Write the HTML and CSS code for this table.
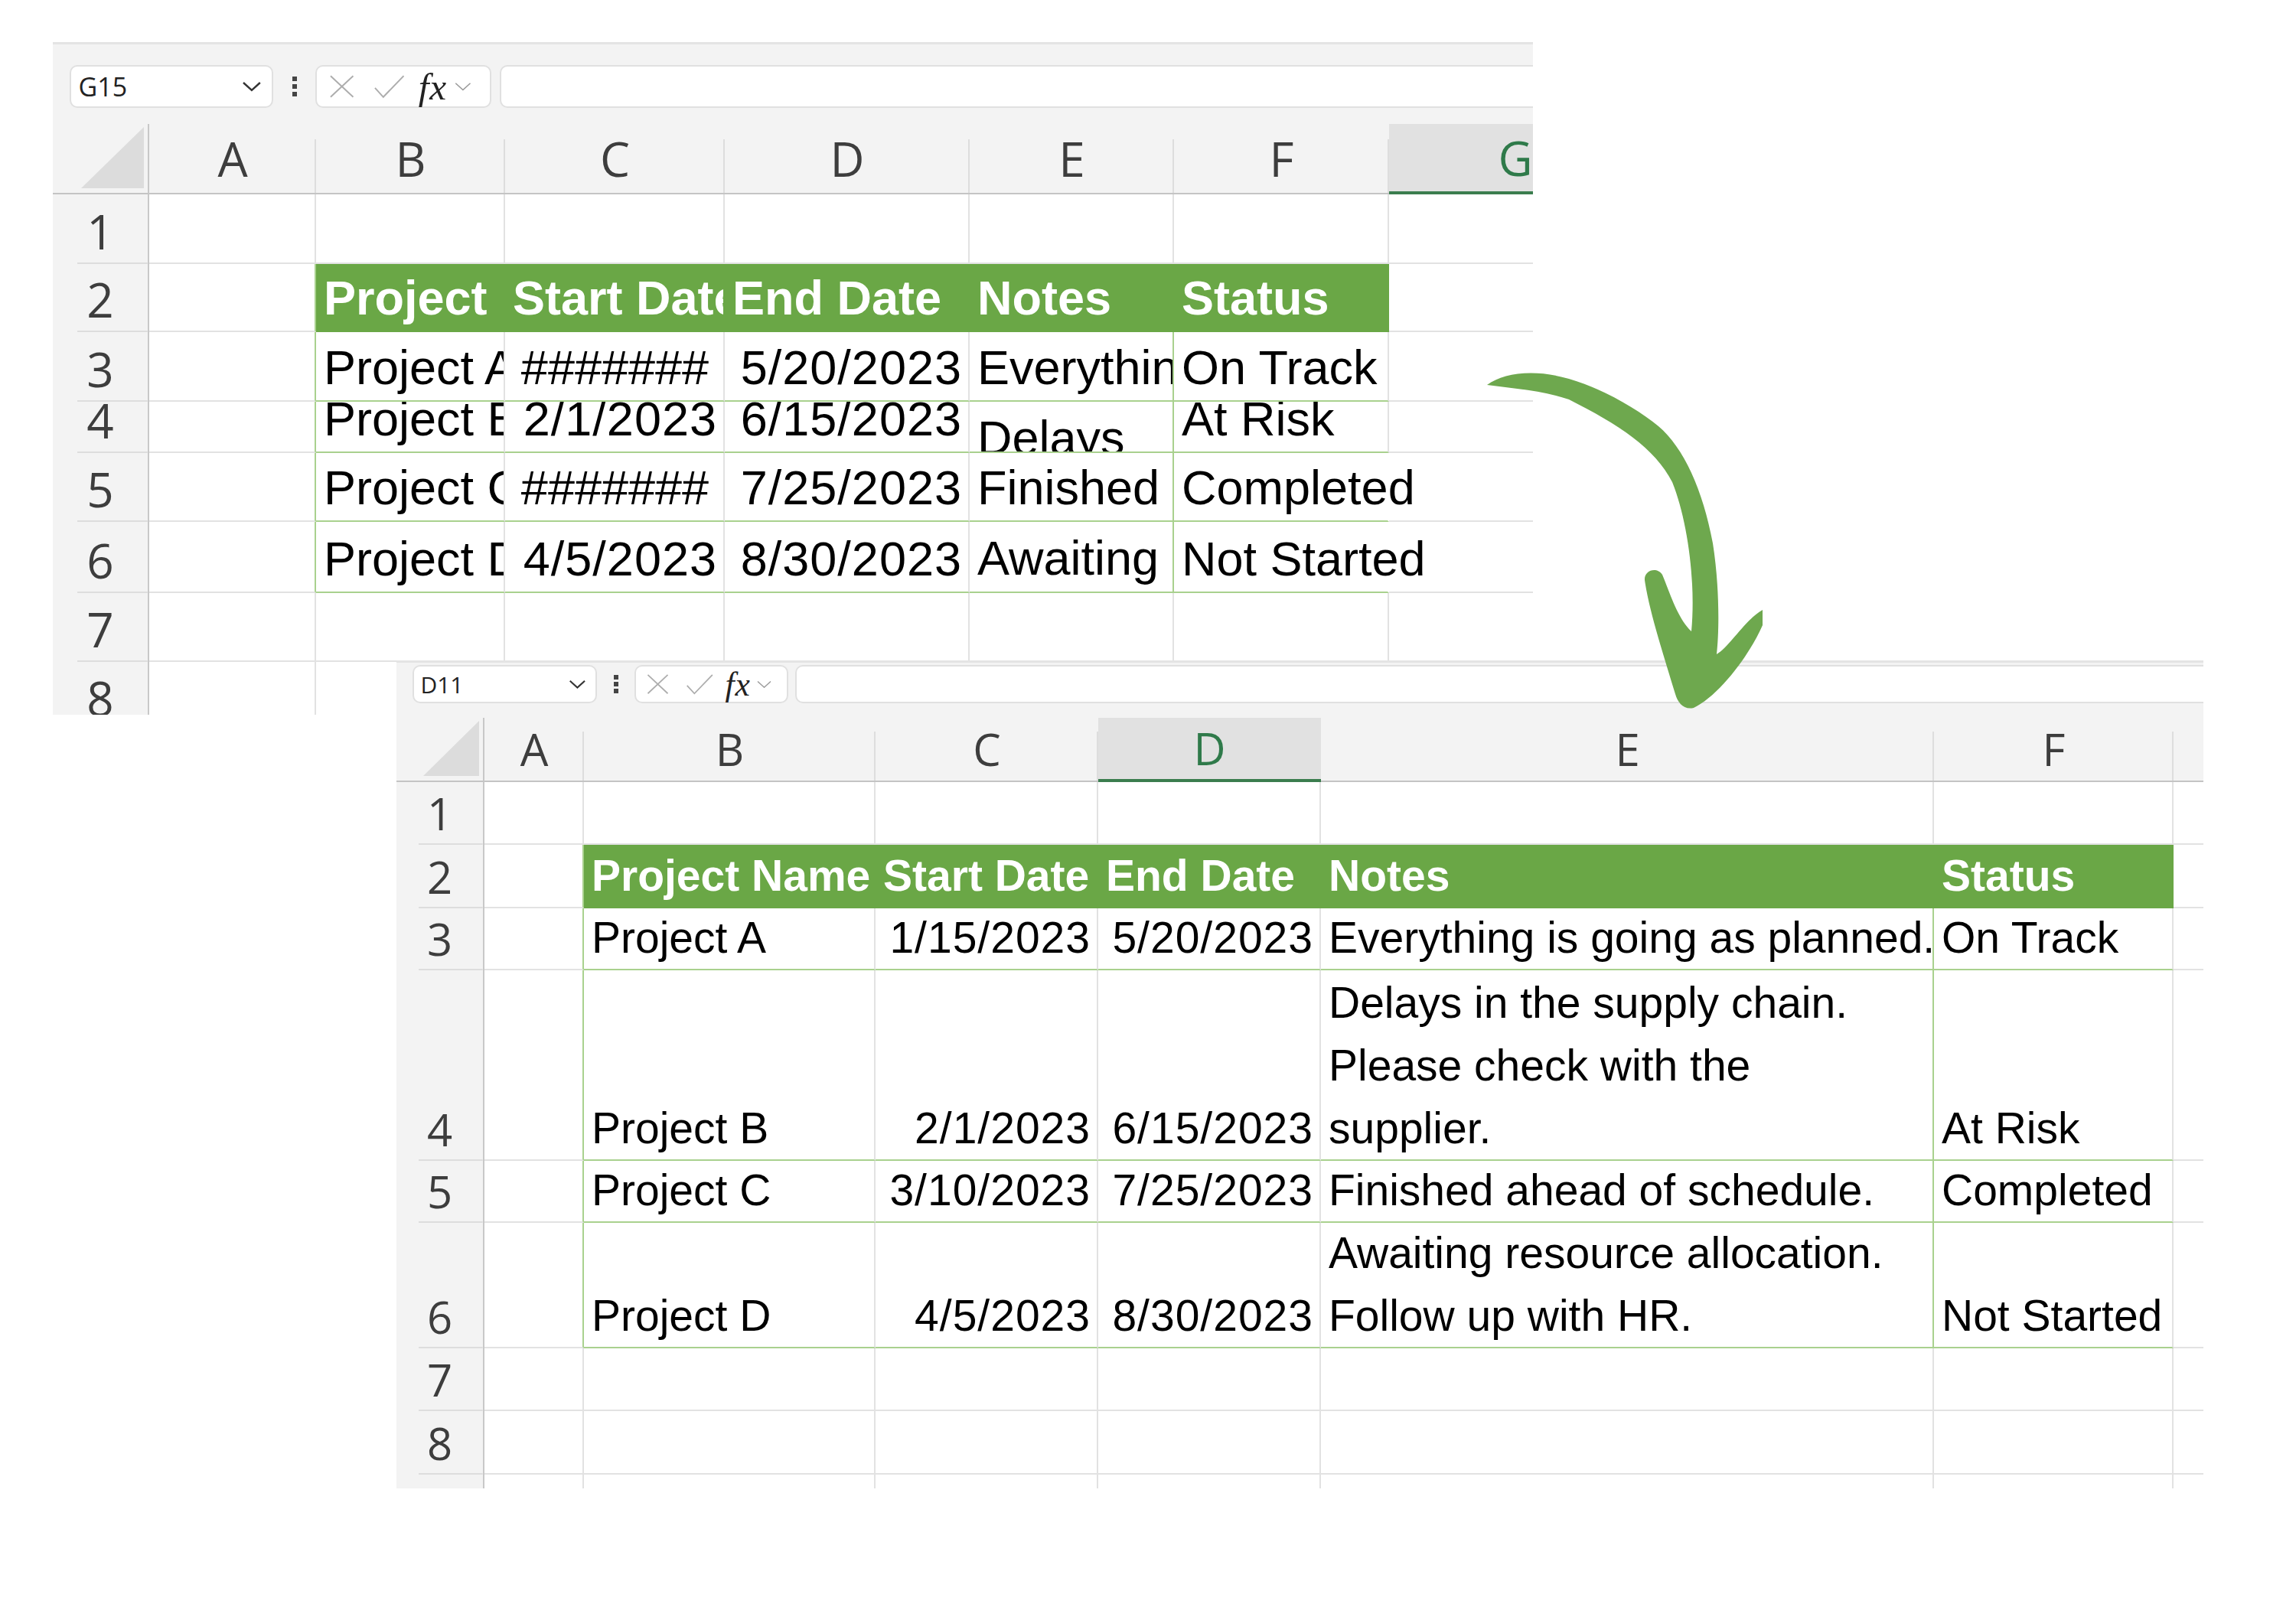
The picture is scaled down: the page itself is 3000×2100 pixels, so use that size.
FILE: index.html
```html
<!DOCTYPE html>
<html lang="en">
<head>
    <meta charset="UTF-8">
    <meta name="viewport" content="width=device-width, initial-scale=1.0">
    <title>Wrap Text: Before and After</title>
    <link rel="stylesheet" href="styles.css">
</head>
<body>
    <div class="canvas">

        <!-- before: columns too narrow, no wrap -->
        <div class="sheet sheet-top">
            <div class="toolbar">
                <div class="namebox"><span>G15</span><svg class="chev" viewBox="0 0 26 14"><path d="M2 2l11 10 11-10"/></svg></div>
                <div class="kebab"><i></i><i></i><i></i></div>
                <div class="fxbox">
                    <svg class="ico ico-x" viewBox="0 0 38 32"><path d="M4 2l30 28M34 2L4 30"/></svg>
                    <svg class="ico ico-ok" viewBox="0 0 42 32"><path d="M2 18l11 12L40 2"/></svg>
                    <span class="fx">fx</span>
                    <svg class="chev chev-sm" viewBox="0 0 26 14"><path d="M2 2l11 10 11-10"/></svg>
                </div>
                <div class="formula"></div>
            </div>
            <div class="grid">
                <div class="corner"><i></i></div>
                <div class="ch">A</div><div class="ch">B</div><div class="ch">C</div><div class="ch">D</div><div class="ch">E</div><div class="ch">F</div><div class="ch sel">G</div>

                <div class="rh">1</div>
                <div class="c"></div><div class="c"></div><div class="c"></div><div class="c"></div><div class="c"></div><div class="c"></div><div class="c"></div>

                <div class="rh">2</div>
                <div class="c tl"></div>
                <div class="c th">Project Name</div>
                <div class="c th">Start Date</div>
                <div class="c th">End Date</div>
                <div class="c th">Notes</div>
                <div class="c th">Status</div>
                <div class="c"></div>

                <div class="rh">3</div>
                <div class="c tl"></div>
                <div class="c td">Project A</div>
                <div class="c td ctr">#######</div>
                <div class="c td r">5/20/2023</div>
                <div class="c td te">Everything is going as planned.</div>
                <div class="c td">On Track</div>
                <div class="c"></div>

                <div class="rh">4</div>
                <div class="c tl"></div>
                <div class="c td">Project B</div>
                <div class="c td r">2/1/2023</div>
                <div class="c td r">6/15/2023</div>
                <div class="c td te wrap"><span>Delays in the supply chain. Please check with the supplier.</span></div>
                <div class="c td">At Risk</div>
                <div class="c"></div>

                <div class="rh">5</div>
                <div class="c tl"></div>
                <div class="c td">Project C</div>
                <div class="c td ctr">#######</div>
                <div class="c td r">7/25/2023</div>
                <div class="c td te">Finished ahead of schedule.</div>
                <div class="c td spill">Completed</div>
                <div class="c"></div>

                <div class="rh">6</div>
                <div class="c tl"></div>
                <div class="c td">Project D</div>
                <div class="c td r">4/5/2023</div>
                <div class="c td r">8/30/2023</div>
                <div class="c td te wrap"><span>Awaiting resource allocation. Follow up with HR.</span></div>
                <div class="c td spill">Not Started</div>
                <div class="c"></div>

                <div class="rh">7</div>
                <div class="c"></div><div class="c"></div><div class="c"></div><div class="c"></div><div class="c"></div><div class="c"></div><div class="c"></div>

                <div class="rh">8</div>
                <div class="c"></div><div class="c"></div><div class="c"></div><div class="c"></div><div class="c"></div><div class="c"></div><div class="c"></div>
            </div>
        </div>

        <!-- after: autofit widths + wrap text -->
        <div class="sheet sheet-bottom">
            <div class="toolbar">
                <div class="namebox"><span>D11</span><svg class="chev" viewBox="0 0 26 14"><path d="M2 2l11 10 11-10"/></svg></div>
                <div class="kebab"><i></i><i></i><i></i></div>
                <div class="fxbox">
                    <svg class="ico ico-x" viewBox="0 0 38 32"><path d="M4 2l30 28M34 2L4 30"/></svg>
                    <svg class="ico ico-ok" viewBox="0 0 42 32"><path d="M2 18l11 12L40 2"/></svg>
                    <span class="fx">fx</span>
                    <svg class="chev chev-sm" viewBox="0 0 26 14"><path d="M2 2l11 10 11-10"/></svg>
                </div>
                <div class="formula"></div>
            </div>
            <div class="grid">
                <div class="corner"><i></i></div>
                <div class="ch">A</div><div class="ch">B</div><div class="ch">C</div><div class="ch sel">D</div><div class="ch">E</div><div class="ch">F</div><div class="ch">G</div>

                <div class="rh">1</div>
                <div class="c"></div><div class="c"></div><div class="c"></div><div class="c"></div><div class="c"></div><div class="c"></div><div class="c"></div>

                <div class="rh">2</div>
                <div class="c tl"></div>
                <div class="c th">Project Name</div>
                <div class="c th">Start Date</div>
                <div class="c th">End Date</div>
                <div class="c th">Notes</div>
                <div class="c th">Status</div>
                <div class="c"></div>

                <div class="rh">3</div>
                <div class="c tl"></div>
                <div class="c td">Project A</div>
                <div class="c td r">1/15/2023</div>
                <div class="c td r">5/20/2023</div>
                <div class="c td te">Everything is going as planned.</div>
                <div class="c td">On Track</div>
                <div class="c"></div>

                <div class="rh">4</div>
                <div class="c tl"></div>
                <div class="c td">Project B</div>
                <div class="c td r">2/1/2023</div>
                <div class="c td r">6/15/2023</div>
                <div class="c td te"><span>Delays in the supply chain.<br>Please check with the<br>supplier.</span></div>
                <div class="c td">At Risk</div>
                <div class="c"></div>

                <div class="rh">5</div>
                <div class="c tl"></div>
                <div class="c td">Project C</div>
                <div class="c td r">3/10/2023</div>
                <div class="c td r">7/25/2023</div>
                <div class="c td te">Finished ahead of schedule.</div>
                <div class="c td">Completed</div>
                <div class="c"></div>

                <div class="rh">6</div>
                <div class="c tl"></div>
                <div class="c td">Project D</div>
                <div class="c td r">4/5/2023</div>
                <div class="c td r">8/30/2023</div>
                <div class="c td te"><span>Awaiting resource allocation.<br>Follow up with HR.</span></div>
                <div class="c td">Not Started</div>
                <div class="c"></div>

                <div class="rh">7</div>
                <div class="c"></div><div class="c"></div><div class="c"></div><div class="c"></div><div class="c"></div><div class="c"></div><div class="c"></div>

                <div class="rh">8</div>
                <div class="c"></div><div class="c"></div><div class="c"></div><div class="c"></div><div class="c"></div><div class="c"></div><div class="c"></div>

                <div class="rh">9</div>
                <div class="c"></div><div class="c"></div><div class="c"></div><div class="c"></div><div class="c"></div><div class="c"></div><div class="c"></div>
            </div>
        </div>

        <!-- hand drawn arrow from before to after -->
        <svg class="arrow" viewBox="0 0 420 500">
            <path d="M43 63C65 47 105 42 150 55C195 68 240 95 267 117C300 145 325 200 338 270C346 320 347 380 343 415C360 405 380 370 403 357L403 377C385 418 345 470 313 485C300 488 292 478 289 467C275 420 255 360 249 318C248 305 265 300 272 311C282 335 292 368 310 385C316 320 305 240 285 190C262 145 215 115 150 82C115 70 80 68 43 63Z"/>
        </svg>
    </div>
</body>
</html>
```

FILE: styles.css
```css
* {
    margin: 0;
    padding: 0;
    box-sizing: border-box;
}

body {
    background: #fff;
    font-family: "Liberation Sans", Arial, sans-serif;
}

.canvas {
    position: relative;
    width: 3000px;
    height: 2100px;
    overflow: hidden;
}

/* each screenshot is a window on the canvas */
.sheet {
    position: absolute;
    background: #f3f3f3;
    border-top: 3px solid #e4e4e4;
    overflow: hidden;
}

.sheet-top {
    left: 69px;
    top: 55px;
    width: 1934px;
    height: 879px;
}

.sheet-bottom {
    left: 518px;
    top: 863px;
    width: 2361px;
    height: 1082px;
}

/* name box + formula bar */
.toolbar {
    display: flex;
    align-items: center;
    font-family: "Open Sans", sans-serif;
    color: #222;
}

.sheet-top .toolbar {
    height: 104px;
    padding: 27px 0 21px 22px;
    font-size: 34px;
}

.sheet-bottom .toolbar {
    height: 72px;
    padding: 3px 0 19px 21px;
    font-size: 30px;
}

.namebox,
.fxbox,
.formula {
    height: 100%;
    background: #fff;
    border: 2px solid #e0e0e0;
    border-radius: 10px;
    display: flex;
    align-items: center;
}

.namebox {
    justify-content: space-between;
    padding: 0 .4em 0 .28em;
}

.sheet-top .namebox { width: 266px; }
.sheet-bottom .namebox { width: 241px; }

.chev {
    width: .76em;
    height: .41em;
    fill: none;
    stroke: #333;
    stroke-width: 2.4;
}

.kebab {
    display: flex;
    flex-direction: column;
    gap: .12em;
    margin-left: .74em;
}

.kebab i {
    width: .18em;
    height: .18em;
    background: #444;
}

.fxbox {
    margin-left: .7em;
    padding-left: .4em;
}

.sheet-top .fxbox { width: 230px; }
.sheet-bottom .fxbox { width: 201px; }

.ico {
    height: .94em;
    fill: none;
    stroke: #adadad;
    stroke-width: 2;
}

.ico-x {
    width: 1.1em;
    margin-right: .68em;
}

.ico-ok {
    width: 1.22em;
    margin-right: .5em;
}

.fx {
    font-family: "Liberation Serif", serif;
    font-style: italic;
    font-size: 1.45em;
    letter-spacing: .02em;
    color: #222;
}

.chev-sm {
    width: .7em;
    height: .36em;
    stroke: #999;
    stroke-width: 1.8;
    margin-left: .25em;
}

.formula {
    flex: 1;
    margin-left: .33em;
    margin-right: -20px;
}

/* cell grid */
.grid {
    display: grid;
    background: #fff;
}

.sheet-top .grid {
    grid-template-columns: 126px 218px 247px 287px 320px 267px 281px 330px;
    grid-template-rows: 92px 91px 89px 91px 67px 90px 93px 90px 90px;
    font-size: 63px;
    line-height: 86px;
}

.sheet-bottom .grid {
    grid-template-columns: 115px 130px 381px 291px 291px 801px 313px 200px;
    grid-template-rows: 84px 82px 83px 81px 249px 81px 164px 82px 83px 83px;
    font-size: 57px;
    line-height: 82px;
}

.corner,
.ch,
.rh {
    font-family: "Open Sans", sans-serif;
    color: #3d3d3d;
}

.sheet-top .ch,
.sheet-top .rh {
    font-size: 62px;
}

.sheet-bottom .ch,
.sheet-bottom .rh {
    font-size: 58px;
}

.corner {
    display: flex;
    justify-content: flex-end;
    align-items: flex-end;
    padding: 0 5px 6px 0;
    background: #f3f3f3;
    border-right: 2px solid #c8c8c8;
    border-bottom: 2px solid #c4c4c4;
}

.corner i {
    width: 82px;
    height: 80px;
    background: #dcdcdc;
    clip-path: polygon(100% 0, 100% 100%, 0 100%);
}

.sheet-bottom .corner i {
    width: 73px;
    height: 72px;
}

.ch {
    display: flex;
    align-items: center;
    justify-content: center;
    background: #f3f3f3 linear-gradient(#dddddd, #dddddd) no-repeat right bottom / 2px 78%;
    border-bottom: 2px solid #c4c4c4;
}

.ch.sel {
    background: #e1e1e1;
    color: #2f7a4a;
    border-bottom: 4px solid #3b7d4e;
}

.rh {
    display: flex;
    align-items: flex-end;
    justify-content: center;
    background: #f3f3f3 linear-gradient(#dddddd, #dddddd) no-repeat right bottom / 74% 2px;
    border-right: 2px solid #c8c8c8;
}

.c {
    display: flex;
    align-items: flex-end;
    padding: 0 8px 0 10px;
    white-space: nowrap;
    overflow: hidden;
    color: #000;
    border-right: 2px solid #e2e2e2;
    border-bottom: 2px solid #e2e2e2;
}

.c.r {
    justify-content: flex-end;
    letter-spacing: 1px;
}

.c.ctr { justify-content: center; }

/* formatted table */
.c.th {
    background: #6aa746;
    border-color: #6aa746;
    color: #fff;
    font-weight: bold;
}

.c.td { border-bottom-color: #a9d18e; }
.c.tl { border-right-color: #a9d18e; }
.c.te { border-right-color: #a9d18e; }

/* wrapped text in a row too short: first line shows */
.c.wrap {
    align-items: flex-start;
    white-space: normal;
}

.sheet-top .c.wrap { padding-top: 4px; }

/* text that runs on into the empty column G */
.c.spill {
    overflow: visible;
    border-right-color: transparent;
}

.arrow {
    position: absolute;
    left: 1900px;
    top: 440px;
    width: 420px;
    height: 500px;
    fill: #6ea84e;
}
```
